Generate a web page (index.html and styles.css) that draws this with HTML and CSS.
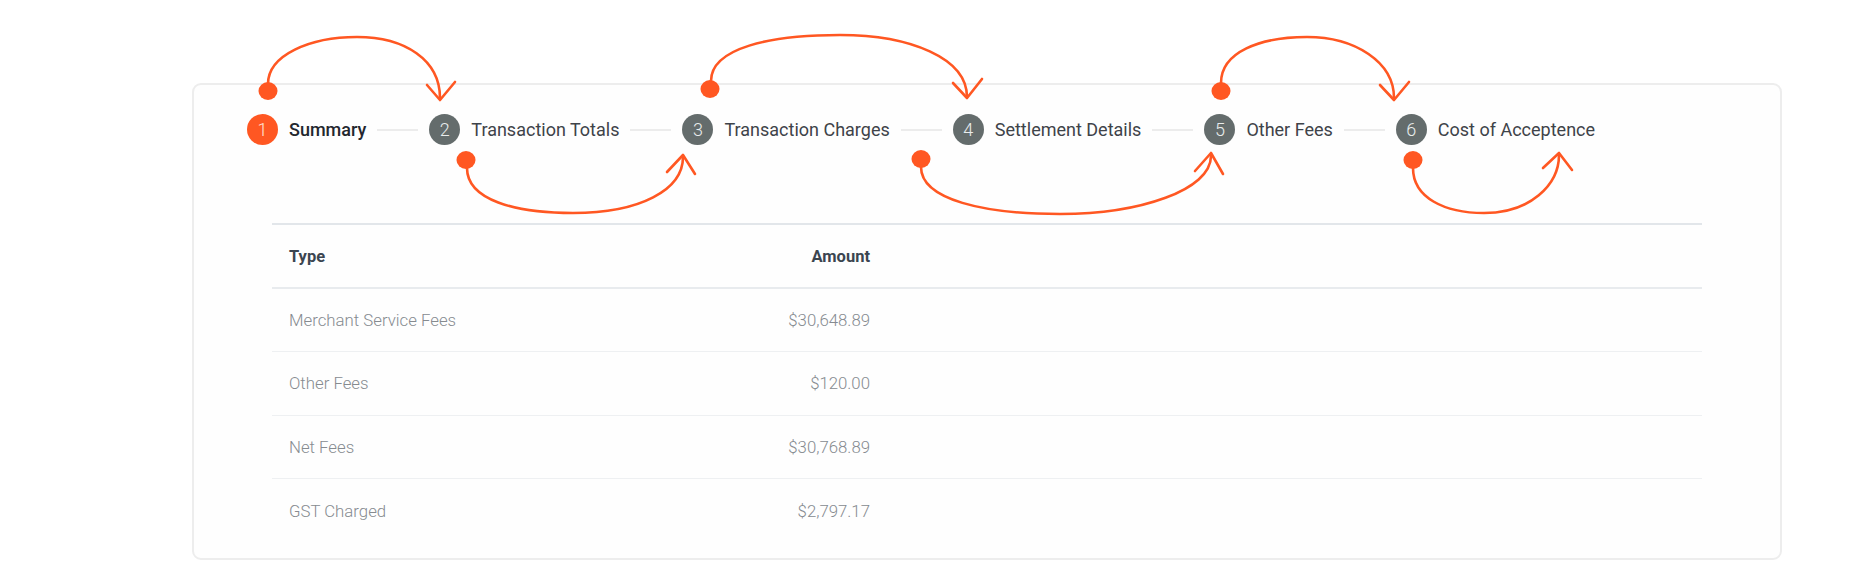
FILE: index.html
```html
<!DOCTYPE html>
<html lang="en">
<head>
<meta charset="utf-8">
<title>Fees Summary</title>
<link rel="stylesheet" href="styles.css">
</head>
<body>
<div class="page">
  <section class="card">
    <nav class="steps">
      <div class="step active"><span class="num">1</span><span class="label">Summary</span></div>
      <span class="connector"></span>
      <div class="step"><span class="num">2</span><span class="label">Transaction Totals</span></div>
      <span class="connector"></span>
      <div class="step"><span class="num">3</span><span class="label">Transaction Charges</span></div>
      <span class="connector"></span>
      <div class="step"><span class="num">4</span><span class="label">Settlement Details</span></div>
      <span class="connector"></span>
      <div class="step"><span class="num">5</span><span class="label">Other Fees</span></div>
      <span class="connector"></span>
      <div class="step"><span class="num">6</span><span class="label">Cost of Acceptence</span></div>
    </nav>

    <div class="fees-table">
      <div class="row head">
        <div class="cell">Type</div>
        <div class="cell amount">Amount</div>
        <div class="cell"></div>
      </div>
      <div class="row">
        <div class="cell">Merchant Service Fees</div>
        <div class="cell amount">$30,648.89</div>
        <div class="cell"></div>
      </div>
      <div class="row">
        <div class="cell">Other Fees</div>
        <div class="cell amount">$120.00</div>
        <div class="cell"></div>
      </div>
      <div class="row">
        <div class="cell">Net Fees</div>
        <div class="cell amount">$30,768.89</div>
        <div class="cell"></div>
      </div>
      <div class="row last">
        <div class="cell">GST Charged</div>
        <div class="cell amount">$2,797.17</div>
        <div class="cell"></div>
      </div>
    </div>
  </section>

  <svg class="annotations" width="1863" height="576" viewBox="0 0 1863 576" aria-hidden="true">
    <g fill="none" stroke="#ff5722" stroke-width="2.6" stroke-linecap="round" stroke-linejoin="round">
      <path d="M268,84 C268,55 310,37 357,37 C405,37 440,60 440,98"/>
      <path d="M427,85 L440,100 L455,82"/>

      <path d="M467,168 C467,200 515,213 573,213 C640,213 683,190 683,157"/>
      <path d="M667,172 L683,155 L695,174"/>

      <path d="M711,81 C711,48 770,35 840,35 C910,35 967,58 967,97"/>
      <path d="M953,83 L967,98 L982,79"/>

      <path d="M921,167 C921,200 985,214 1060,214 C1140,214 1211,190 1211,156"/>
      <path d="M1195,171 L1211,153 L1223,174"/>

      <path d="M1221,83 C1221,52 1260,37 1307,37 C1355,37 1394,62 1394,98"/>
      <path d="M1380,85 L1394,100 L1409,82"/>

      <path d="M1413,168 C1413,198 1445,213 1484,213 C1530,213 1559,185 1559,155"/>
      <path d="M1543,168 L1559,153 L1572,170"/>
    </g>
    <g fill="#ff5722">
      <ellipse cx="268" cy="91" rx="9.5" ry="9"/>
      <ellipse cx="466" cy="160" rx="9.5" ry="9"/>
      <ellipse cx="710" cy="89" rx="9.5" ry="9"/>
      <ellipse cx="921" cy="159" rx="9.5" ry="9"/>
      <ellipse cx="1221" cy="91" rx="9.5" ry="9"/>
      <ellipse cx="1413" cy="160" rx="9.5" ry="9"/>
    </g>
  </svg>
</div>
</body>
</html>
```

FILE: styles.css
```css
* { box-sizing: border-box; }

html, body {
  margin: 0;
  padding: 0;
  background: #ffffff;
}

body {
  font-family: Roboto, "Liberation Sans", Arial, sans-serif;
  color: #3a3f45;
}

.page {
  position: relative;
  width: 1863px;
  height: 576px;
  padding: 83px 0 0 192px;
}

.card {
  width: 1590px;
  height: 477px;
  border: 2px solid #ededed;
  border-radius: 9px;
  background: #fefefe;
  padding: 29px 78px 0 53px;
}

/* ---------- Stepper ---------- */
.steps {
  display: flex;
  align-items: center;
  gap: 11px;
  height: 31px;
}

.step {
  display: flex;
  align-items: center;
  gap: 11px;
}

.num {
  width: 31px;
  height: 31px;
  border-radius: 50%;
  background: #646c6c;
  color: #e9ecec;
  font-size: 18px;
  font-weight: 300;
  display: flex;
  align-items: center;
  justify-content: center;
  line-height: 1;
}

.step.active .num {
  background: #ff5722;
  color: #ffe3d6;
}

.label {
  font-size: 18px;
  color: #3e4349;
  white-space: nowrap;
}

.step.active .label {
  color: #23272e;
  font-weight: 500;
}

.connector {
  width: 41px;
  height: 2px;
  background: #ececec;
}

/* ---------- Table ---------- */
.fees-table {
  margin: 78px 0 0 25px;
  border-top: 2px solid #e2e6ea;
}

.row {
  display: grid;
  grid-template-columns: 307px 308px 1fr;
  align-items: center;
  height: 63.3px;
  border-bottom: 1px solid #eef0f2;
}

.row.head {
  height: 64px;
  border-bottom: 2px solid #e8ebee;
}

.row.last {
  border-bottom: none;
}

.cell {
  padding: 0 17px;
  font-size: 16.8px;
  font-weight: 300;
  color: #868b90;
  white-space: nowrap;
}

.cell.amount {
  text-align: right;
}

.row.head .cell {
  font-size: 16.5px;
  font-weight: 700;
  color: #3b4550;
}

/* ---------- Annotations overlay ---------- */
.annotations {
  position: absolute;
  top: 0;
  left: 0;
  pointer-events: none;
}
```
